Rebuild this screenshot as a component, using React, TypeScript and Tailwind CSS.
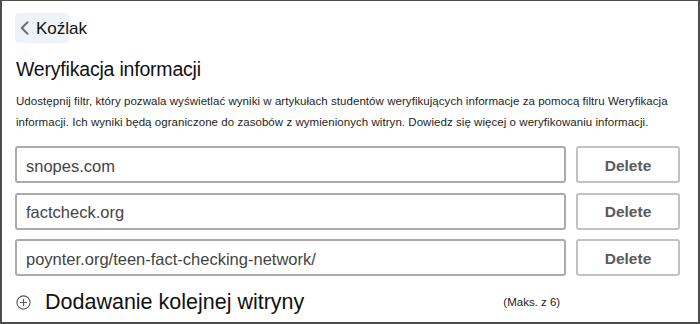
const SITES = ["snopes.com", "factcheck.org", "poynter.org/teen-fact-checking-network/"];

function PlusCircle() {
  return (
    <svg width="15" height="15" viewBox="0 0 15 15" fill="none" stroke="#5a5a5a" strokeWidth="1.1">
      <circle cx="7.5" cy="7.5" r="6.6" />
      <path d="M7.5 4v7M4 7.5h7" />
    </svg>
  );
}

function Chevron() {
  return (
    <svg width="9" height="14" viewBox="0 0 9 14" fill="none" stroke="#6e6e6e" strokeWidth="2" strokeLinecap="round" strokeLinejoin="round">
      <path d="M7.5 1.2 1.8 7l5.7 5.8" />
    </svg>
  );
}

export default function App() {
  return (
    <div
      className="w-[700px] h-[324px] bg-white border-2 border-t border-[#4d4d4d] overflow-hidden text-[#111]"
      style={{ fontFamily: '"Liberation Sans", Arial, sans-serif' }}
    >
      <div className="pl-[13px] pr-[18px] pt-3">
        <div className="flex items-center h-[30px] w-[54px] rounded-[4px] bg-[#eef3f9] whitespace-nowrap">
          <div className="ml-[5px] shrink-0 flex">
            <Chevron />
          </div>
          <span className="ml-[7px] pt-[2px] text-[17px] text-[#111]">Koźlak</span>
        </div>

        <h1 className="mt-[14px] ml-[1px] text-[19.5px] leading-[24px] tracking-[-0.2px] font-normal">
          Weryfikacja informacji
        </h1>

        <p className="mt-[10px] ml-[1px] text-[11.5px] leading-[21px] text-[#1e1e1e] whitespace-nowrap tracking-[0.05px]">
          Udostępnij filtr, który pozwala wyświetlać wyniki w artykułach studentów weryfikujących informacje za pomocą filtru Weryfikacja
          <br />
          informacji. Ich wyniki będą ograniczone do zasobów z wymienionych witryn. Dowiedz się więcej o weryfikowaniu informacji.
        </p>

        <div className="mt-[13px] flex flex-col gap-[9.5px]">
          {SITES.map((s) => (
            <div key={s} className="flex items-stretch gap-[10px] h-[37px]">
              <div className="w-[551px] flex items-center pl-[9px] pt-[3px] border-2 border-[#ababab] rounded-[3px] text-[16.5px] text-[#444]">
                {s}
              </div>
              <button className="w-[104px] flex items-center justify-center pt-[2px] border-2 border-[#c2c2c2] rounded-[3px] bg-white text-[15.5px] font-bold text-[#5a5a5a]">
                Delete
              </button>
            </div>
          ))}
        </div>

        <div className="mt-[13px] flex items-center h-[26px]">
          <div className="ml-[1px] w-[15px] flex items-center">
            <PlusCircle />
          </div>
          <span className="ml-[14px] text-[21.5px] leading-[26px] text-[#111]">Dodawanie kolejnej witryny</span>
          <span className="ml-[199px] mt-[2px] text-[11.5px] text-[#222]">(Maks. z 6)</span>
        </div>
      </div>
    </div>
  );
}
